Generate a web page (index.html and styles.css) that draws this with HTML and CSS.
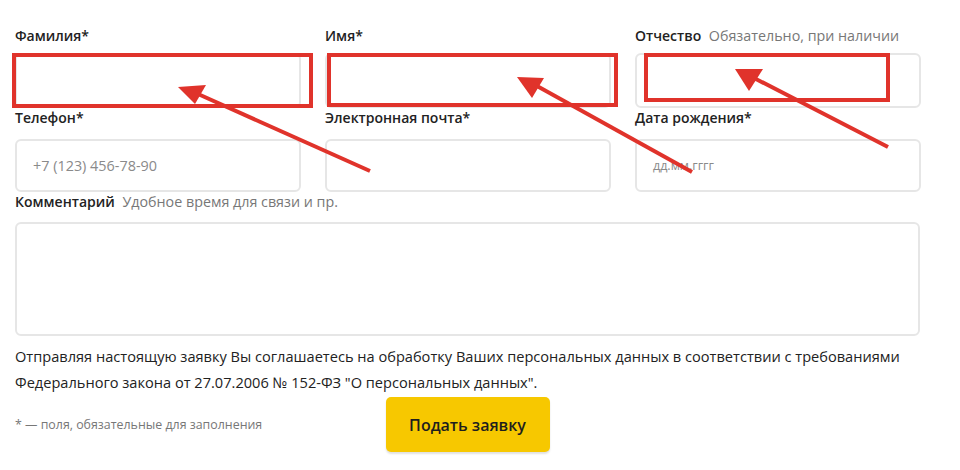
FILE: index.html
```html
<!DOCTYPE html>
<html lang="ru">
<head>
<meta charset="utf-8">
<title>Заявка</title>
<link rel="stylesheet" href="styles.css">
</head>
<body>
<div class="page">
  <form class="form">
    <div class="grid">
      <div class="field">
        <div class="label">Фамилия*</div>
        <div class="input"></div>
      </div>
      <div class="field">
        <div class="label">Имя*</div>
        <div class="input"></div>
      </div>
      <div class="field">
        <div class="label">Отчество <span class="hint">Обязательно, при наличии</span></div>
        <div class="input"></div>
      </div>
      <div class="field">
        <div class="label">Телефон*</div>
        <div class="input input-b"><span class="ph">+7 (123) 456-78-90</span></div>
      </div>
      <div class="field">
        <div class="label">Электронная почта*</div>
        <div class="input input-b"></div>
      </div>
      <div class="field">
        <div class="label">Дата рождения*</div>
        <div class="input input-b"><span class="ph ph-date">дд.мм.гггг</span></div>
      </div>
    </div>
    <div class="label label-c">Комментарий <span class="hint">Удобное время для связи и пр.</span></div>
    <div class="textarea"></div>
    <p class="legal">Отправляя настоящую заявку Вы соглашаетесь на обработку Ваших персональных данных в соответствии с требованиями Федерального закона от 27.07.2006 № 152-ФЗ "О персональных данных".</p>
    <div class="bottom">
      <div class="note">* — поля, обязательные для заполнения</div>
      <div class="btn">Подать заявку</div>
      <div></div>
    </div>
  </form>
  <svg class="annot" width="960" height="470" viewBox="0 0 960 470">
    <g fill="none" stroke="#e0332b" stroke-width="4">
      <rect x="14" y="55" width="297" height="51"/>
      <rect x="329" y="55" width="287" height="50"/>
      <rect x="646" y="55" width="242" height="45"/>
      <line x1="370" y1="171" x2="198" y2="94"/>
      <line x1="692" y1="172" x2="537" y2="86"/>
      <line x1="888" y1="147" x2="754" y2="78"/>
    </g>
    <g fill="#e0332b">
      <polygon points="178,87 206,85 195,104"/>
      <polygon points="517,77 544,78 532,98"/>
      <polygon points="735,69 763,69 749,91"/>
    </g>
  </svg>
</div>
</body>
</html>
```
FILE: styles.css
```css
* { box-sizing: border-box; }
html, body { margin: 0; padding: 0; background: #fff; }
body {
  font-family: "Open Sans", "Liberation Sans", sans-serif;
  color: #222;
  width: 960px;
  height: 470px;
  overflow: hidden;
}
.page { position: relative; width: 960px; height: 470px; }
.form { padding: 26px 40px 0 15px; margin: 0; }
.grid {
  display: grid;
  grid-template-columns: 286px 286px 286px;
  column-gap: 24px;
  row-gap: 0;
}
.label {
  font-size: 14px;
  font-weight: 600;
  line-height: 20px;
  height: 20px;
  white-space: nowrap;
}
.hint { font-weight: 400; color: #777; margin-left: 4px; font-size: 14.3px; }
.input {
  margin-top: 7px;
  height: 55px;
  border: 2px solid #e6e6e6;
  border-radius: 6px;
  display: flex;
  align-items: center;
  padding-left: 16px;
}
.input-b { margin-top: 11px; height: 53px; }
.ph { font-size: 14.4px; color: #8a8a8a; }
.ph-date { font-size: 12.5px; color: #8a8a8a; }
.textarea {
  margin-top: 10px;
  width: 905px;
  height: 114px;
  border: 2px solid #e6e6e6;
  border-radius: 6px;
}
.legal {
  margin: 7px 0 0;
  width: 905px;
  font-size: 14.6px;
  line-height: 26px;
  color: #222;
}
.bottom {
  margin-top: 2px;
  width: 905px;
  display: grid;
  grid-template-columns: 1fr auto 1fr;
  align-items: center;
}
.note { font-size: 12.4px; color: #777; }
.btn {
  width: 164px;
  height: 55px;
  background: #f7c800;
  border-radius: 5px;
  box-shadow: 0 2px 2px rgba(0,0,0,0.12);
  display: flex;
  align-items: center;
  justify-content: center;
  font-size: 16px;
  font-weight: 600;
  color: #1e1e1e;
}
.annot { position: absolute; left: 0; top: 0; pointer-events: none; }
```
